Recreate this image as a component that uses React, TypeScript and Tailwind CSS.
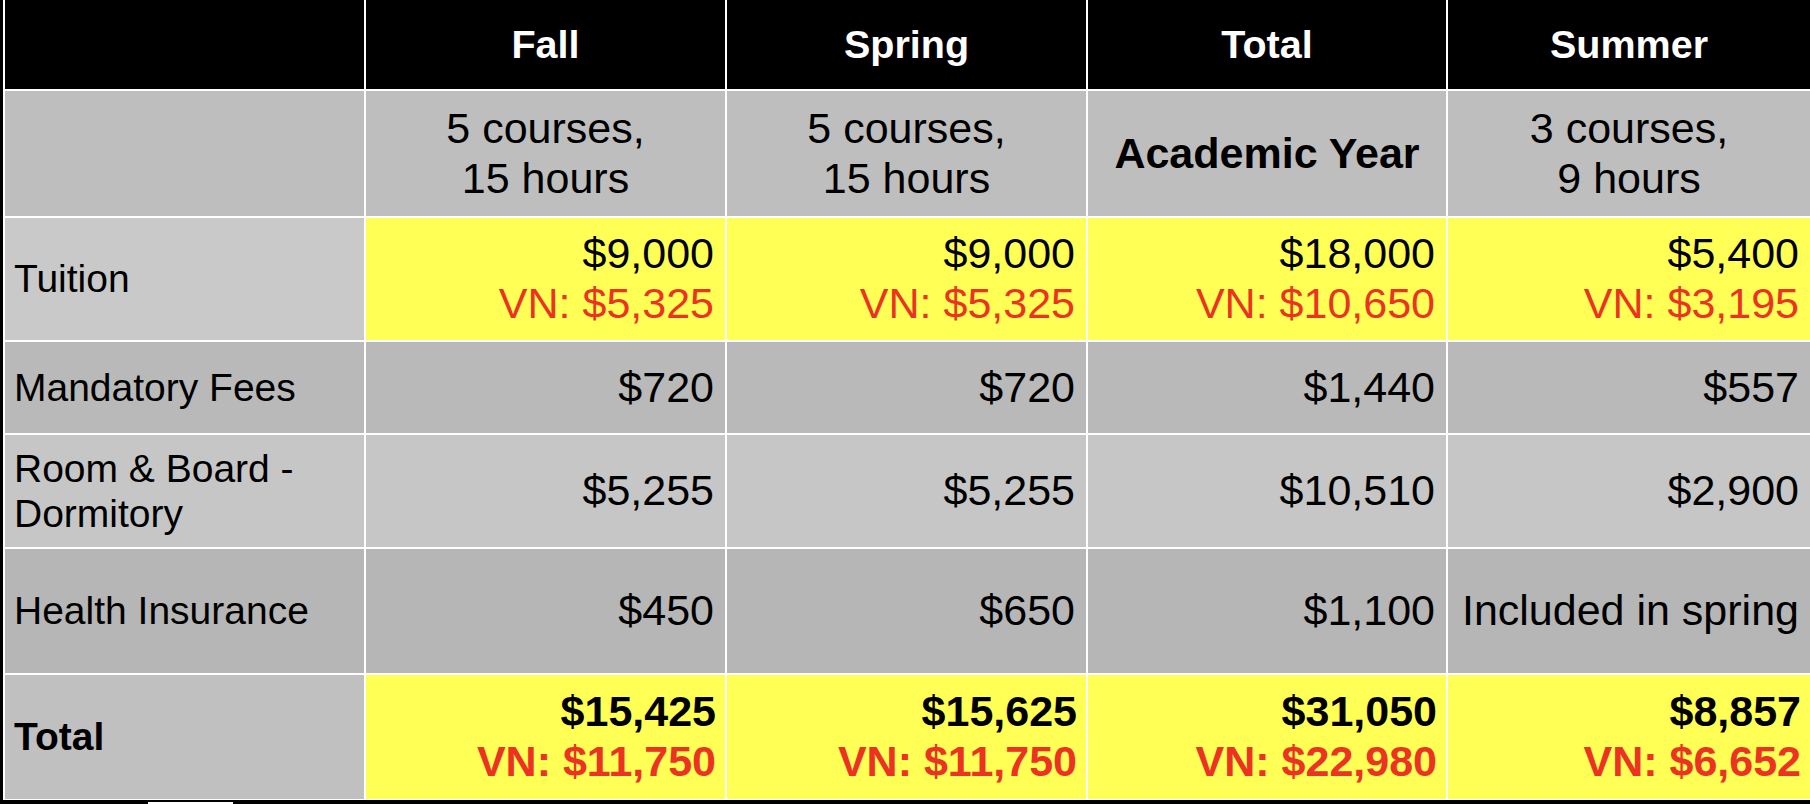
import React from "react";

type Row = {
  label: string[];
  labelBg: string;
  bold?: boolean;
  cellBg: string;
  cells: { main: string; vn?: string }[];
  height: string;
};

const rows: Row[] = [
  {
    label: ["Tuition"],
    labelBg: "bg-[#c9c9c9]",
    cellBg: "bg-[#ffff55]",
    height: "h-[122px]",
    cells: [
      { main: "$9,000", vn: "VN: $5,325" },
      { main: "$9,000", vn: "VN: $5,325" },
      { main: "$18,000", vn: "VN: $10,650" },
      { main: "$5,400", vn: "VN: $3,195" },
    ],
  },
  {
    label: ["Mandatory Fees"],
    labelBg: "bg-[#b9b9b9]",
    cellBg: "bg-[#b9b9b9]",
    height: "h-[91px]",
    cells: [{ main: "$720" }, { main: "$720" }, { main: "$1,440" }, { main: "$557" }],
  },
  {
    label: ["Room & Board -", "Dormitory"],
    labelBg: "bg-[#c6c6c6]",
    cellBg: "bg-[#c6c6c6]",
    height: "h-[112px]",
    cells: [{ main: "$5,255" }, { main: "$5,255" }, { main: "$10,510" }, { main: "$2,900" }],
  },
  {
    label: ["Health Insurance"],
    labelBg: "bg-[#b6b6b6]",
    cellBg: "bg-[#b6b6b6]",
    height: "h-[124px]",
    cells: [{ main: "$450" }, { main: "$650" }, { main: "$1,100" }, { main: "Included in spring" }],
  },
  {
    label: ["Total"],
    labelBg: "bg-[#c0c0c0]",
    bold: true,
    cellBg: "bg-[#ffff55]",
    height: "h-[124px]",
    cells: [
      { main: "$15,425", vn: "VN: $11,750" },
      { main: "$15,625", vn: "VN: $11,750" },
      { main: "$31,050", vn: "VN: $22,980" },
      { main: "$8,857", vn: "VN: $6,652" },
    ],
  },
];

const heads = ["Fall", "Spring", "Total", "Summer"];
const subs = [["5 courses,", "15 hours"], ["5 courses,", "15 hours"], null, ["3 courses,", "9 hours"]];

export default function App() {
  return (
    <div className="w-[1810px] h-[804px] bg-black overflow-hidden font-['Liberation_Sans',Arial,sans-serif] text-black">
      <div className="ml-[3px] pl-[2px] pb-[1px] bg-white grid grid-cols-[359px_359px_359px_358px_1fr] gap-[2px]">
        {/* header */}
        <div className="h-[89px] bg-black" />
        {heads.map((h) => (
          <div key={h} className="h-[89px] bg-black flex items-center justify-center text-white font-bold text-[39.5px]">
            {h}
          </div>
        ))}

        {/* courses row */}
        <div className="h-[125px] bg-[#bebebe]" />
        {subs.map((s, i) => (
          <div key={i} className="h-[125px] bg-[#bebebe] flex flex-col items-center justify-center text-[43px] leading-[1.16] text-center">
            {s ? (
              s.map((l) => <span key={l}>{l}</span>)
            ) : (
              <span className="font-bold">Academic Year</span>
            )}
          </div>
        ))}

        {rows.map((r) => (
          <React.Fragment key={r.label[0]}>
            <div className={`${r.height} ${r.labelBg} flex flex-col justify-center pl-[9px] text-[39px] leading-[1.16] ${r.bold ? "font-bold" : ""}`}>
              {r.label.map((l) => (
                <span key={l}>{l}</span>
              ))}
            </div>
            {r.cells.map((c, i) => (
              <div
                key={i}
                className={`${r.height} ${r.cellBg} flex flex-col items-end justify-center text-[43px] leading-[1.16] whitespace-nowrap ${r.bold ? "font-bold pr-[9px]" : "pr-[11px]"}`}
              >
                <span>{c.main}</span>
                {c.vn && <span className="text-[#ec3323]">{c.vn}</span>}
              </div>
            ))}
          </React.Fragment>
        ))}
      </div>
      <div className="ml-[148px] mt-[2px] w-[85px] h-[2px] bg-white" />
    </div>
  );
}
